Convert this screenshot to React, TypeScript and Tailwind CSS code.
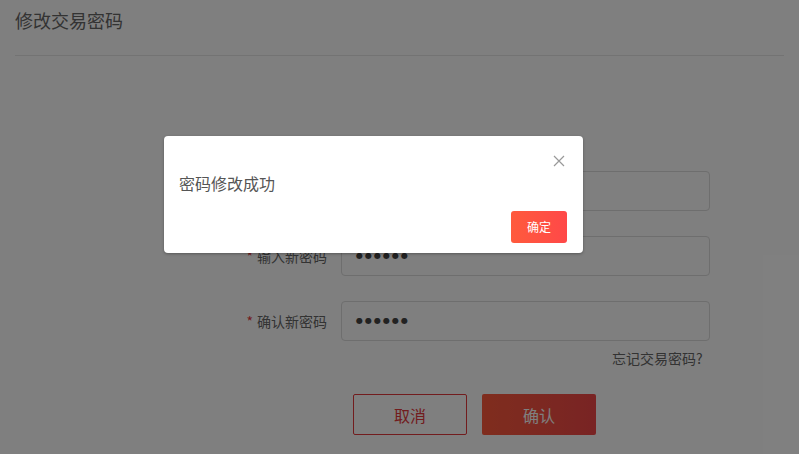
import React from "react";

const rows = [
  { label: "", value: "" },
  { label: "输入新密码", value: "●●●●●●" },
  { label: "确认新密码", value: "●●●●●●" },
];

export default function App() {
  return (
    <div
      className="relative w-[799px] h-[454px] overflow-hidden bg-white"
      style={{ fontFamily: '"Noto Sans CJK SC", "Noto Sans", sans-serif' }}
    >
      {/* Page */}
      <div className="px-[15px]">
        <div className="h-[56px] border-b border-[#e6e6e6] pt-[8px] text-[18px] leading-[24px] text-[#666]">
          修改交易密码
        </div>

        <div className="mt-[115px] flex flex-col gap-[25px]">
          {rows.map((r, i) => (
            <div key={i} className="flex items-center">
              <div className="w-[312px] text-right text-[14px] text-[#666]">
                {r.label && <span className="mr-[4px] text-[#e4393c]">*</span>}
                {r.label}
              </div>
              <div className="ml-[14px] flex h-[40px] w-[369px] items-center rounded-[4px] border border-[#dcdcdc] px-[14px] font-['DejaVu_Sans'] text-[8px] tracking-[2px] text-[#444]">
                {r.value}
              </div>
            </div>
          ))}
        </div>

        <div className="ml-[597px] mt-[7px] text-[14px] text-[#666]">忘记交易密码?</div>

        <div className="ml-[338px] mt-[25px] flex gap-[15px]">
          <button className="h-[41px] w-[114px] rounded-[2px] border border-[#e4393c] text-[16px] text-[#e4393c]">
            取消
          </button>
          <button className="h-[41px] w-[114px] rounded-[2px] bg-gradient-to-r from-[#ff5a3c] to-[#f24848] text-[16px] text-white">
            确认
          </button>
        </div>
      </div>

      {/* Overlay */}
      <div className="absolute inset-0 bg-black/50" />

      {/* Dialog */}
      <div className="absolute left-[164px] top-[136px] flex h-[117px] w-[419px] flex-col rounded-[4px] bg-white px-[15px] shadow-[0_1px_3px_rgba(0,0,0,0.3)]">
        <div className="flex justify-end pt-[19px] pr-[3px]">
          <svg width="12" height="12" viewBox="0 0 12 12" className="text-[#999]">
            <path d="M1 1 L11 11 M11 1 L1 11" stroke="currentColor" strokeWidth="1.2" fill="none" />
          </svg>
        </div>
        <div className="mt-[5px] text-[16px] leading-[22px] text-[#555]">密码修改成功</div>
        <div className="mt-[17px] flex justify-end pr-[1px]">
          <button className="h-[32px] w-[56px] rounded-[3px] bg-gradient-to-r from-[#ff5a3c] to-[#ff4848] text-[12px] text-white">
            确定
          </button>
        </div>
      </div>
    </div>
  );
}
